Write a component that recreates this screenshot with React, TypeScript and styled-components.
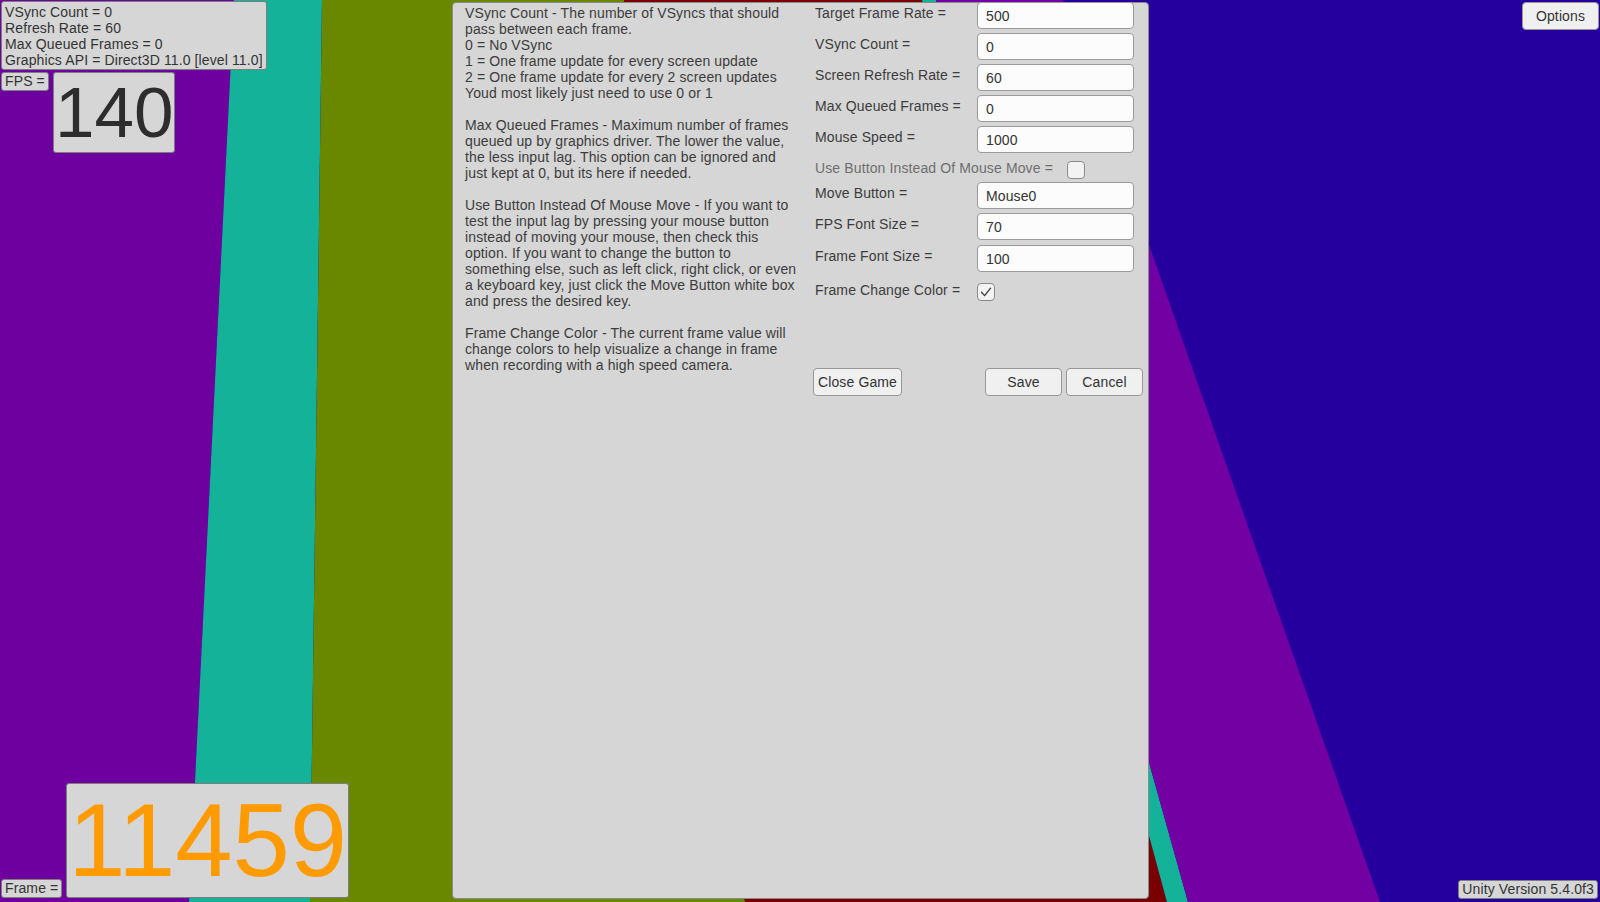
import React from "react";
import styled, { createGlobalStyle } from "styled-components";

const GlobalStyle = createGlobalStyle`
  html, body {
    margin: 0;
    padding: 0;
    width: 100%;
    height: 100%;
    overflow: hidden;
  }
  body {
    font-family: "Liberation Sans", Arial, sans-serif;
    font-size: 14px;
    letter-spacing: 0.12px;
    color: #3a3a3a;
  }
  #root {
    width: 100%;
    height: 100%;
  }
`;

const FONT = `"Liberation Sans", Arial, sans-serif`;

const Stage = styled.div`
  position: relative;
  width: 1600px;
  height: 902px;
  overflow: hidden;
  background: #25009f;
`;

const SceneCanvas = styled.svg`
  position: absolute;
  inset: 0;
  width: 100%;
  height: 100%;
  display: block;
`;

const Hud = styled.div`
  position: relative;
  display: grid;
  grid-template-columns: 452px 697px 1fr;
  height: 100%;
`;

/* ---------- left HUD ---------- */

const LeftHud = styled.div`
  display: flex;
  flex-direction: column;
  justify-content: space-between;
  align-items: flex-start;
  padding: 1px 0 4px 1px;
`;

const HudGroup = styled.div`
  display: flex;
  flex-direction: column;
  align-items: flex-start;
`;

const HudRow = styled.div<{ $align: string; $mt?: number }>`
  display: flex;
  align-items: ${(p) => p.$align};
  gap: 4px;
  margin-top: ${(p) => p.$mt ?? 0}px;
`;

const InfoBox = styled.div`
  background: #d6d6d6;
  border: 1px solid #7d7d7d;
  border-radius: 3px;
  color: #333333;
  font-size: 14px;
  line-height: 16px;
  padding: 2px 3px 1px 3px;
  white-space: nowrap;
`;

const TagBox = styled.div<{ $mr?: number }>`
  background: #d6d6d6;
  border: 1px solid #7d7d7d;
  border-radius: 3px;
  color: #333333;
  font-size: 14px;
  line-height: 15px;
  padding: 1px 3px;
  white-space: nowrap;
  margin-right: ${(p) => p.$mr ?? 0}px;
`;

const CounterBox = styled.div<{ $size: number; $line: number; $color: string }>`
  background: #d6d6d6;
  border: 1px solid #7d7d7d;
  border-radius: 3px;
  color: ${(p) => p.$color};
  font-size: ${(p) => p.$size}px;
  line-height: ${(p) => p.$line}px;
  letter-spacing: 0;
  padding: 0 1px;
  white-space: nowrap;
`;

/* ---------- center panel ---------- */

const Panel = styled.section`
  margin: 2px 0 3px;
  background: #d6d6d6;
  border: 1px solid #8a8a8a;
  border-radius: 4px;
  display: flex;
  gap: 12px;
  padding: 0 0 0 12px;
`;

const HelpColumn = styled.div`
  width: 336px;
  padding-top: 2px;
  color: #3c3c3c;
  font-size: 14px;
  line-height: 16px;
`;

const HelpParagraph = styled.p`
  margin: 0 0 16px;
  white-space: nowrap;
`;

const SettingsColumn = styled.div`
  width: 330px;
  margin-top: -1px;
  display: flex;
  flex-direction: column;
`;

const FieldRow = styled.div<{ $mt: number }>`
  display: flex;
  align-items: flex-start;
  margin-top: ${(p) => p.$mt}px;
`;

const ToggleRow = styled.div<{ $mt: number }>`
  display: flex;
  align-items: center;
  height: 22px;
  margin-top: ${(p) => p.$mt}px;
`;

const FieldLabel = styled.label<{ $muted?: boolean; $pt?: number }>`
  min-width: 164px;
  box-sizing: border-box;
  padding: ${(p) => p.$pt ?? 0}px 0 0 2px;
  font-size: 14px;
  line-height: 16px;
  color: ${(p) => (p.$muted ? "#6e6e6e" : "#3c3c3c")};
  white-space: nowrap;
`;

const TextField = styled.input`
  width: 157px;
  height: 27px;
  box-sizing: border-box;
  margin: 0;
  border: 1px solid #9a9a9a;
  border-radius: 4px;
  background: #fcfcfc;
  padding: 0 8px;
  font-family: ${FONT};
  font-size: 14px;
  letter-spacing: 0.12px;
  color: #333333;
  outline: none;
`;

const CheckBox = styled.span<{ $ml: number }>`
  align-self: flex-end;
  width: 18px;
  height: 18px;
  box-sizing: border-box;
  margin-left: ${(p) => p.$ml}px;
  border: 1px solid #8a8a8a;
  border-radius: 4px;
  background: #f3f3f3;
  display: flex;
  align-items: center;
  justify-content: center;
`;

const ButtonBar = styled.div`
  display: flex;
  justify-content: space-between;
  margin-top: 67px;
`;

const ButtonGroup = styled.div`
  display: flex;
  gap: 4px;
`;

const GuiButton = styled.button<{ $w: number }>`
  width: ${(p) => p.$w}px;
  height: 28px;
  box-sizing: border-box;
  margin: 0;
  padding: 0;
  border: 1px solid #979797;
  border-radius: 4px;
  background: #f0f0f0;
  font-family: ${FONT};
  font-size: 14px;
  letter-spacing: 0.12px;
  color: #333333;
  cursor: pointer;
`;

/* ---------- right HUD ---------- */

const RightHud = styled.div`
  display: flex;
  flex-direction: column;
  justify-content: space-between;
  align-items: flex-end;
  padding: 2px 1px 3px 0;
`;

/* ---------- data ---------- */

const helpText: string[][] = [
  [
    "VSync Count - The number of VSyncs that should",
    "pass between each frame.",
    "0 = No VSync",
    "1 = One frame update for every screen update",
    "2 = One frame update for every 2 screen updates",
    "Youd most likely just need to use 0 or 1",
  ],
  [
    "Max Queued Frames - Maximum number of frames",
    "queued up by graphics driver. The lower the value,",
    "the less input lag. This option can be ignored and",
    "just kept at 0, but its here if needed.",
  ],
  [
    "Use Button Instead Of Mouse Move - If you want to",
    "test the input lag by pressing your mouse button",
    "instead of moving your mouse, then check this",
    "option. If you want to change the button to",
    "something else, such as left click, right click, or even",
    "a keyboard key, just click the Move Button white box",
    "and press the desired key.",
  ],
  [
    "Frame Change Color - The current frame value will",
    "change colors to help visualize a change in frame",
    "when recording with a high speed camera.",
  ],
];

type Setting =
  | { kind: "field"; label: string; value: string; mt: number }
  | { kind: "toggle"; label: string; checked: boolean; muted?: boolean; ml: number; mt: number };

const settings: Setting[] = [
  { kind: "field", label: "Target Frame Rate =", value: "500", mt: 0 },
  { kind: "field", label: "VSync Count =", value: "0", mt: 4 },
  { kind: "field", label: "Screen Refresh Rate =", value: "60", mt: 4 },
  { kind: "field", label: "Max Queued Frames =", value: "0", mt: 4 },
  { kind: "field", label: "Mouse Speed =", value: "1000", mt: 4 },
  { kind: "toggle", label: "Use Button Instead Of Mouse Move =", checked: false, muted: true, ml: 14, mt: 4 },
  { kind: "field", label: "Move Button =", value: "Mouse0", mt: 3 },
  { kind: "field", label: "FPS Font Size =", value: "70", mt: 4 },
  { kind: "field", label: "Frame Font Size =", value: "100", mt: 5 },
  { kind: "toggle", label: "Frame Change Color =", checked: true, ml: 0, mt: 7 },
];

const CheckMark = () => (
  <svg width="14" height="14" viewBox="0 0 14 14" fill="none">
    <polyline points="2.5,7.2 5.6,10.6 11.6,3.2" stroke="#3a3a3a" strokeWidth="1.3" strokeLinecap="round" strokeLinejoin="round" />
  </svg>
);

const Scene = () => (
  <SceneCanvas viewBox="0 0 1600 902" preserveAspectRatio="none">
    <rect x="0" y="0" width="1600" height="902" fill="#25009f" />
    <polygon points="0,0 234,0 189,902 0,902" fill="#6f00a0" />
    <polygon points="234,0 322,0 310,902 189,902" fill="#14b399" />
    <polygon points="322,0 624,0 745,902 310,902" fill="#698800" />
    <polygon points="624,0 922,0 1167,902 745,902" fill="#780000" />
    <polygon points="922,0 936,0 1188,902 1167,902" fill="#14b399" />
    <polygon points="936,0 1063,0 1380,902 1188,902" fill="#7200a3" />
  </SceneCanvas>
);

export default function App() {
  return (
    <>
      <GlobalStyle />
      <Stage>
        <Scene />
        <Hud>
          <LeftHud>
            <HudGroup>
              <InfoBox>
                VSync Count = 0
                <br />
                Refresh Rate = 60
                <br />
                Max Queued Frames = 0
                <br />
                Graphics API = Direct3D 11.0 [level 11.0]
              </InfoBox>
              <HudRow $align="flex-start" $mt={2}>
                <TagBox>FPS =</TagBox>
                <CounterBox $size={71} $line={79} $color="#2d2d2d">
                  140
                </CounterBox>
              </HudRow>
            </HudGroup>
            <HudRow $align="flex-end">
              <TagBox>Frame =</TagBox>
              <CounterBox $size={103} $line={113} $color="#ff9b00">
                11459
              </CounterBox>
            </HudRow>
          </LeftHud>

          <Panel>
            <HelpColumn>
              {helpText.map((para, i) => (
                <HelpParagraph key={i}>
                  {para.map((line, j) => (
                    <React.Fragment key={j}>
                      {line}
                      {j < para.length - 1 && <br />}
                    </React.Fragment>
                  ))}
                </HelpParagraph>
              ))}
            </HelpColumn>

            <SettingsColumn>
              {settings.map((s) =>
                s.kind === "field" ? (
                  <FieldRow key={s.label} $mt={s.mt}>
                    <FieldLabel $pt={3}>{s.label}</FieldLabel>
                    <TextField readOnly defaultValue={s.value} />
                  </FieldRow>
                ) : (
                  <ToggleRow key={s.label} $mt={s.mt}>
                    <FieldLabel $muted={s.muted}>{s.label}</FieldLabel>
                    <CheckBox $ml={s.ml}>{s.checked && <CheckMark />}</CheckBox>
                  </ToggleRow>
                )
              )}
              <ButtonBar>
                <GuiButton $w={89}>Close Game</GuiButton>
                <ButtonGroup>
                  <GuiButton $w={77}>Save</GuiButton>
                  <GuiButton $w={77}>Cancel</GuiButton>
                </ButtonGroup>
              </ButtonBar>
            </SettingsColumn>
          </Panel>

          <RightHud>
            <GuiButton $w={77}>Options</GuiButton>
            <TagBox $mr={1}>Unity Version 5.4.0f3</TagBox>
          </RightHud>
        </Hud>
      </Stage>
    </>
  );
}
